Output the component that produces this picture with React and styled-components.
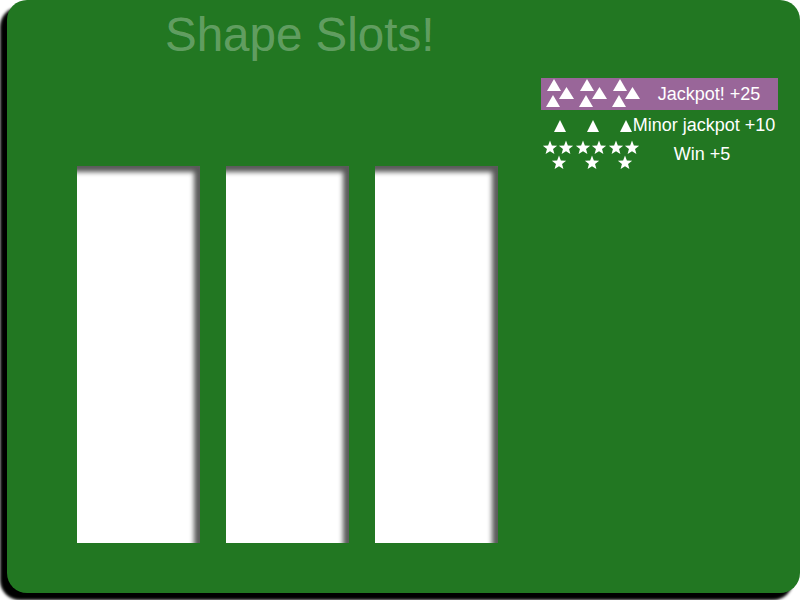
import React from 'react';
import styled, { createGlobalStyle } from 'styled-components';

const GlobalStyle = createGlobalStyle`
  html, body {
    margin: 0;
    padding: 0;
    background: #fff;
    font-family: "Liberation Sans", Arial, sans-serif;
  }
  body {
    min-height: 600px;
  }
`;

const starPoints = (cx, cy, R = 7.5, r = 3.2) => {
  const pts = [];
  for (let i = 0; i < 10; i++) {
    const a = (-90 + i * 36) * Math.PI / 180;
    const rad = i % 2 === 0 ? R : r;
    pts.push(`${(cx + rad * Math.cos(a)).toFixed(2)},${(cy + rad * Math.sin(a)).toFixed(2)}`);
  }
  return pts.join(' ');
};

const tri = (x, y, w, h) => `${x + w / 2},${y} ${x + w},${y + h} ${x},${y + h}`;

const JackpotCell = () => (
  <Shape width="33" height="32">
    <polygon points={tri(6, 1, 14, 12)} />
    <polygon points={tri(18, 9, 15, 12)} />
    <polygon points={tri(5, 17, 14, 12)} />
  </Shape>
);

const MinorCell = () => (
  <Shape width="33" height="30">
    <polygon points={tri(13, 10, 12, 12)} />
  </Shape>
);

const WinCell = () => (
  <Shape width="33" height="28">
    <polygon points={starPoints(9, 8)} />
    <polygon points={starPoints(25, 8)} />
    <polygon points={starPoints(18, 23)} />
  </Shape>
);

const payouts = [
  { Cell: JackpotCell, label: 'Jackpot! +25', highlight: true, shift: 3 },
  { Cell: MinorCell, label: 'Minor jackpot +10', shift: -2 },
  { Cell: WinCell, label: 'Win +5', shift: -4 },
];

const App = () => (
  <>
    <GlobalStyle />
    <Board>
      <Machine>
        <Title>Shape Slots!</Title>
        <Reels>
          <Reel />
          <Reel />
          <Reel />
        </Reels>
      </Machine>
      <Paytable>
        {payouts.map(({ Cell, label, highlight, shift }) => (
          <Row key={label} $highlight={highlight}>
            <Cell />
            <Cell />
            <Cell />
            <Label $shift={shift}>{label}</Label>
          </Row>
        ))}
      </Paytable>
    </Board>
  </>
);

const Board = styled.div`
  box-sizing: border-box;
  margin-left: 7px;
  width: 793px;
  height: 593px;
  background: #227722;
  border-radius: 20px;
  box-shadow: -7px 7px 3px #000;
  display: flex;
  padding-left: 70px;
`;

const Machine = styled.div`
  display: flex;
  flex-direction: column;
`;

const Title = styled.h1`
  margin: 11px 0 0 88px;
  font-size: 47.5px;
  line-height: 48px;
  font-weight: normal;
  color: rgba(255, 255, 255, 0.3);
  white-space: nowrap;
`;

const Reels = styled.div`
  display: flex;
  gap: 26px;
  margin-top: 107px;
`;

const Reel = styled.div`
  width: 123px;
  height: 377px;
  background: #fff;
  box-shadow: inset -6px 6px 5px rgba(0, 0, 0, 0.65);
`;

const Paytable = styled.div`
  margin: 78px 0 0 43px;
  width: 237px;
  display: flex;
  flex-direction: column;
`;

const Row = styled.div`
  display: grid;
  grid-template-columns: 33px 33px 33px 1fr;
  align-items: center;
  background: ${(p) => (p.$highlight ? '#996699' : 'transparent')};
`;

const Shape = styled.svg`
  display: block;
  overflow: visible;
  fill: #fff;
`;

const Label = styled.div`
  margin-left: -6px;
  color: #fff;
  font-size: 18px;
  text-align: center;
  white-space: nowrap;
  line-height: 20px;
  transform: translateX(${(p) => p.$shift}px);
`;

export default App;
